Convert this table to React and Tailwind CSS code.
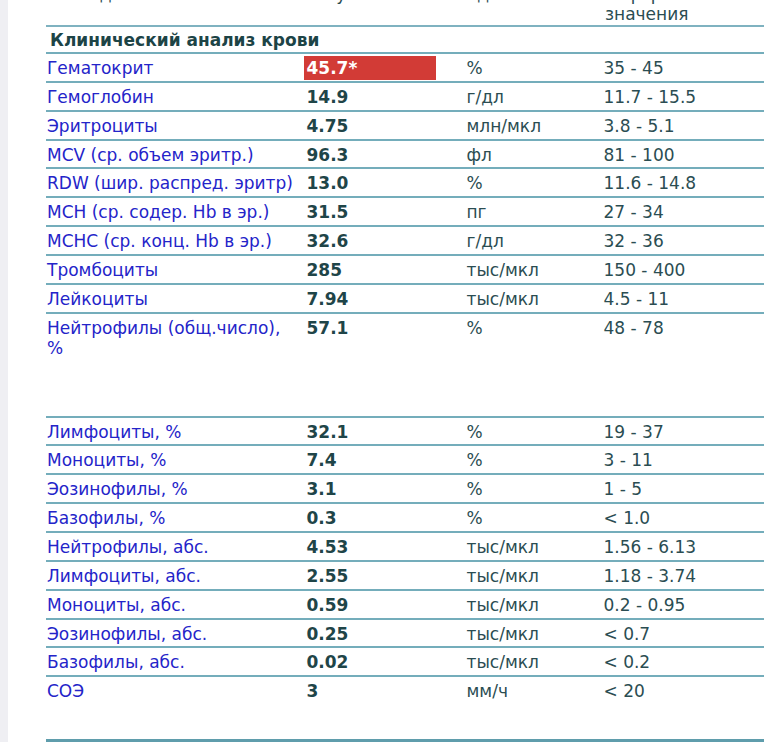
const rows = [
  { name: 'Гематокрит', value: '45.7*', unit: '%', ref: '35 - 45', flag: true },
  { name: 'Гемоглобин', value: '14.9', unit: 'г/дл', ref: '11.7 - 15.5' },
  { name: 'Эритроциты', value: '4.75', unit: 'млн/мкл', ref: '3.8 - 5.1' },
  { name: 'MCV (ср. объем эритр.)', value: '96.3', unit: 'фл', ref: '81 - 100' },
  { name: 'RDW (шир. распред. эритр)', value: '13.0', unit: '%', ref: '11.6 - 14.8' },
  { name: 'MCH (ср. содер. Hb в эр.)', value: '31.5', unit: 'пг', ref: '27 - 34' },
  { name: 'MCHC (ср. конц. Hb в эр.)', value: '32.6', unit: 'г/дл', ref: '32 - 36' },
  { name: 'Тромбоциты', value: '285', unit: 'тыс/мкл', ref: '150 - 400' },
  { name: 'Лейкоциты', value: '7.94', unit: 'тыс/мкл', ref: '4.5 - 11' },
  { name: ['Нейтрофилы (общ.число),', '%'], value: '57.1', unit: '%', ref: '48 - 78', tall: true },
  { name: 'Лимфоциты, %', value: '32.1', unit: '%', ref: '19 - 37' },
  { name: 'Моноциты, %', value: '7.4', unit: '%', ref: '3 - 11' },
  { name: 'Эозинофилы, %', value: '3.1', unit: '%', ref: '1 - 5' },
  { name: 'Базофилы, %', value: '0.3', unit: '%', ref: '< 1.0' },
  { name: 'Нейтрофилы, абс.', value: '4.53', unit: 'тыс/мкл', ref: '1.56 - 6.13' },
  { name: 'Лимфоциты, абс.', value: '2.55', unit: 'тыс/мкл', ref: '1.18 - 3.74' },
  { name: 'Моноциты, абс.', value: '0.59', unit: 'тыс/мкл', ref: '0.2 - 0.95' },
  { name: 'Эозинофилы, абс.', value: '0.25', unit: 'тыс/мкл', ref: '< 0.7' },
  { name: 'Базофилы, абс.', value: '0.02', unit: 'тыс/мкл', ref: '< 0.2' },
  { name: 'СОЭ', value: '3', unit: 'мм/ч', ref: '< 20', last: true },
];

function Row({ r }) {
  const h = r.tall ? 'h-[104px]' : r.last ? 'h-[64px]' : 'h-[28.85px]';
  return (
    <div className={`flex items-start border-t-2 border-[#74adbb] pt-[4px] ${h}`}>
      <div className="w-[258px] shrink-0 pl-[1px] text-[#2424c9] whitespace-nowrap">
        {Array.isArray(r.name) ? (
          <>
            {r.name[0]}
            <br />
            {r.name[1]}
          </>
        ) : (
          r.name
        )}
      </div>
      <div className="w-[160px] shrink-0 -mt-[2px]">
        <div
          className={`w-[132px] h-[23.5px] pt-[2px] pl-[2.5px] font-bold ${
            r.flag ? 'bg-[#d23b36] text-white' : 'text-[#1f4548]'
          }`}
        >
          {r.value}
        </div>
      </div>
      <div className="w-[136px] shrink-0 pl-[2.5px] text-[#2b4d52]">{r.unit}</div>
      <div className="flex-1 pl-[3.5px] text-[#2b4d52]">{r.ref}</div>
    </div>
  );
}

export default function App() {
  return (
    <div
      className="flex h-[742px] overflow-hidden bg-white text-[17px] leading-[20px]"
      style={{ fontFamily: '"DejaVu Sans", Verdana, sans-serif' }}
    >
      <div className="w-[8px] shrink-0 bg-[#efeff3]" />
      <div className="flex-1 pl-[38px] -mt-[16px]">
        {/* шапка таблицы, верхняя строка уходит за край */}
        <div className="flex h-[41px] text-[#2b4d52]">
          <div className="w-[258px] shrink-0 pl-[1px]">Исследование</div>
          <div className="w-[160px] shrink-0 pl-[2.5px]">Результат</div>
          <div className="w-[136px] shrink-0 pl-[2.5px]">Ед. изм.</div>
          <div className="flex-1 pl-[5px]">
            Референсные
            <br />
            значения
          </div>
        </div>

        <div className="flex h-[27px] border-t-2 border-[#7fb2c0] pt-[3px] pl-[4px] font-bold text-[#1d4446]">
          Клинический анализ крови
        </div>

        {rows.map((r, i) => (
          <Row key={i} r={r} />
        ))}

        <div className="h-[3px] bg-[#5f9dac]" />
      </div>
    </div>
  );
}
